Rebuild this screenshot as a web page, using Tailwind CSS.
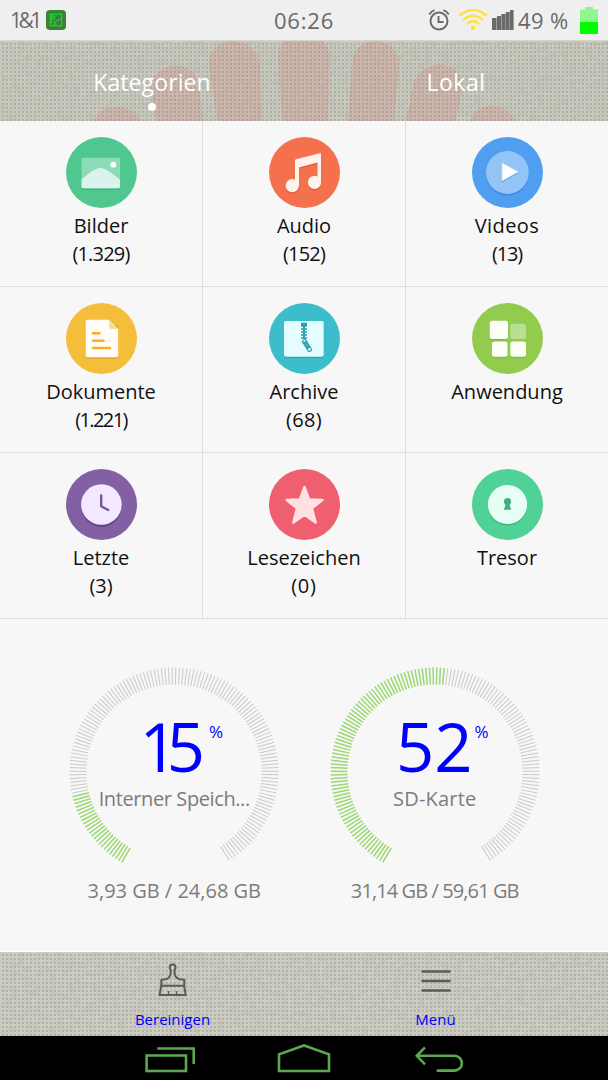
<!DOCTYPE html>
<html lang="de">
<head>
    <meta charset="UTF-8">
    <meta name="viewport" content="width=device-width, initial-scale=1.0">
    <title>Dateimanager</title>
    <script src="https://cdn.jsdelivr.net/npm/@tailwindcss/browser@4"></script>
</head>
<body class="bg-[#f7f7f7] font-['Open_Sans','Noto_Sans',sans-serif]">
    <div class="w-[608px] h-[1080px] flex flex-col overflow-hidden">

        <!-- Status bar -->
        <div class="h-[41px] shrink-0 bg-[#efefef] border-b border-[#d5d5d0] grid grid-cols-[1fr_auto_1fr] items-center text-[22px] text-[#696969]">
            <div class="flex items-center pl-[10px]">
                <span class="w-9 pt-0.5 text-[21px] tracking-[-3.5px]">1&amp;1</span>
                <svg class="w-5 h-5" viewBox="0 0 20 20" fill="none">
                    <rect width="20" height="20" rx="4" fill="#3b8139"/>
                    <g stroke="#24d52c" stroke-width="1.2">
                        <rect x="4.3" y="4.3" width="11.4" height="11.4"/>
                        <circle cx="7" cy="7.5" r="1.7"/>
                        <path d="M4.5 12.5l3-1.5M8 15.5c.5-4 3.5-6 7.5-6.5"/>
                    </g>
                </svg>
            </div>
            <span class="tracking-[0.8px]">06:26</span>
            <div class="flex items-center justify-end pr-[10px]">
                <svg class="w-[22px] h-[22px] mr-2" viewBox="0 0 22 22" fill="none" stroke="#696969" stroke-width="1.9">
                    <circle cx="11" cy="12" r="8.5"/>
                    <path d="M10.5 7v6h5"/>
                    <path d="M1.2 5.5Q3 2.5 6.5 1.2M20.8 5.5Q19 2.5 15.5 1.2"/>
                </svg>
                <svg class="w-[30px] h-[22px] mr-1" viewBox="0 0 30 22" fill="none" stroke="#fbe436" stroke-width="2.5">
                    <path d="M1.5 6.5Q15-4.5 28.5 6.5M5 11Q15 2.5 25 11M9 15Q15 9.5 21 15"/>
                    <circle cx="15" cy="18.8" r="2.2" fill="#fbe436" stroke="none"/>
                </svg>
                <svg class="w-[22px] h-5 mr-1" viewBox="0 0 22 20" fill="#6a6a6a">
                    <path d="M0 8h4.6V20H0zM5 6h4v14H5zM9.4 4h4v16h-4zM13.7 2h4v18h-4zM18 0h3.6v20H18z"/>
                </svg>
                <span class="w-[62px] whitespace-nowrap tracking-[0.4px]">49 %</span>
                <svg class="w-[18px] h-[27px]" viewBox="0 0 18 27">
                    <path d="M5 0h8v2.5h5V15H0V2.5h5z" fill="#90f790"/>
                    <path d="M0 15h18v12H0z" fill="#00fc00"/>
                </svg>
            </div>
        </div>

        <!-- Tabs on linen background -->
        <div class="relative h-20 shrink-0 overflow-hidden bg-[#c5c6ba]">
            <svg class="absolute inset-0 w-full h-full" viewBox="0 0 608 80">
                <defs>
                    <pattern id="weave" width="4" height="4" patternUnits="userSpaceOnUse">
                        <path d="M0 0h4v1H0zM0 0h1v4H0z" fill="#fff" fill-opacity=".12"/>
                        <path d="M2 2h2v2H2z" fill="#4b4f46" fill-opacity=".17"/>
                    </pattern>
                    <filter id="threads" x="0" y="0" width="100%" height="100%">
                        <feTurbulence type="fractalNoise" baseFrequency=".16 .2" numOctaves="2" seed="4"/>
                        <feColorMatrix values="0 0 0 0 .4  0 0 0 0 .4  0 0 0 0 .33  .6 0 0 0 -.2"/>
                    </filter>
                </defs>
                <g fill="#cca99f" fill-opacity=".75">
                    <path d="M94 80C99 62 134 61 141 80z"/>
                    <path d="M156 80L151 50C149 20 192 15 199 43L203 80z"/>
                    <path d="M217 80L209 25C207-7 255-8 260 23L262 80z"/>
                    <path d="M282 80L278 15C279-12 329-12 330 15L328 80z"/>
                    <path d="M348 80L352 22C354-8 400-7 399 25L394 80z"/>
                    <path d="M406 80L413 43C424 14 465 18 462 48L456 80z"/>
                    <path d="M470 80C476 60 506 59 515 80z"/>
                </g>
                <rect width="608" height="80" fill="url(#weave)"/>
                <rect width="608" height="80" filter="url(#threads)"/>
            </svg>
            <div class="relative grid grid-cols-2 text-center text-white text-[23px] leading-8 pt-[25px]">
                <div class="flex flex-col items-center">
                    <span class="tracking-[0.1px]">Kategorien</span>
                    <span class="w-2 h-2 rounded-full bg-white mt-[5px]"></span>
                </div>
                <span class="tracking-[0.5px]">Lokal</span>
            </div>
        </div>

        <!-- Categories -->
        <div class="grid grid-cols-[203px_203px_202px] auto-rows-[166px] text-center text-[20px] leading-7 text-[#111]">
            <div class="flex flex-col items-center pt-4 border-r border-b border-[#dedede]">
                <svg class="w-[71px] h-[71px] mb-1 shrink-0" viewBox="0 0 71 71">
                    <circle cx="35.5" cy="35.5" r="35.5" fill="#50c78f"/>
                    <rect x="15.5" y="22.5" width="38.5" height="30.5" rx="1.5" fill="#3fb57d"/>
                    <rect x="15.5" y="20.7" width="38.5" height="30.6" rx="1.5" fill="#8edbb7"/>
                    <path d="M15.5 42.5C23 36 29 31 34.5 31S46 36 54 43v6.8q0 1.5-1.5 1.5H17q-1.5 0-1.5-1.5z" fill="#daf3ee"/>
                    <circle cx="47.3" cy="27.7" r="2.9" fill="#fff"/>
                </svg>
                <span>Bilder</span>
                <span class="tracking-[-0.8px]">(1.329)</span>
            </div>
            <div class="flex flex-col items-center pt-4 border-r border-b border-[#dedede]">
                <svg class="w-[71px] h-[71px] mb-1 shrink-0" viewBox="0 0 71 71">
                    <circle cx="35.5" cy="35.5" r="35.5" fill="#f5714d"/>
                    <g fill="#e85a38" transform="translate(0 1.5)">
                        <path d="M26 23.5q0-1 1-1.3l24-6q1-.2 1 .8V46h-3.500V25.500L30 30.500V49h-4z"/>
                        <circle cx="23.2" cy="48.7" r="6.6"/>
                        <circle cx="45.5" cy="45.3" r="6.6"/>
                    </g>
                    <g fill="#fff3f0">
                        <path d="M26 23.5q0-1 1-1.3l24-6q1-.2 1 .8V46h-3.500V25.500L30 30.500V49h-4z"/>
                        <circle cx="23.2" cy="48.7" r="6.6"/>
                        <circle cx="45.5" cy="45.3" r="6.6"/>
                    </g>
                </svg>
                <span>Audio</span>
                <span class="tracking-[-0.8px]">(152)</span>
            </div>
            <div class="flex flex-col items-center pt-4 border-b border-[#dedede]">
                <svg class="w-[71px] h-[71px] mb-1 shrink-0" viewBox="0 0 71 71">
                    <circle cx="35.5" cy="35.5" r="35.5" fill="#509eef"/>
                    <circle cx="35.4" cy="37" r="21.4" fill="#3c86ee"/>
                    <circle cx="35.4" cy="35.5" r="21.4" fill="#94c4f6"/>
                    <path d="M30 28.3l16 8.2-16 9z" fill="#6fa9ec"/>
                    <path d="M30.3 26.5l15.5 8.3-15.5 8.8z" fill="#fff" stroke="#fff" stroke-width=".6" stroke-linejoin="round"/>
                </svg>
                <span class="tracking-[0.4px]">Videos</span>
                <span class="tracking-[-1.2px]">(13)</span>
            </div>

            <div class="flex flex-col items-center pt-4 border-r border-b border-[#dedede]">
                <svg class="w-[71px] h-[71px] mb-1 shrink-0" viewBox="0 0 71 71">
                    <circle cx="35.5" cy="35.5" r="35.5" fill="#f4bd3a"/>
                    <rect x="19.7" y="22" width="32.5" height="33.8" rx="2" fill="#e0a82c"/>
                    <path d="M21.7 16.7H43l9.2 9.3v26.3q0 2-2 2H21.7q-2 0-2-2V18.7q0-2 2-2z" fill="#fffdf5"/>
                    <path d="M43 16.7l9.2 9.3H45q-2 0-2-2z" fill="#f1dfa9"/>
                    <path d="M27 30.3h6.5M27 37.7h10.5M27 45h17" stroke="#f9ae25" stroke-width="2.6" stroke-linecap="round"/>
                </svg>
                <span>Dokumente</span>
                <span class="tracking-[-1.6px]">(1.221)</span>
            </div>
            <div class="flex flex-col items-center pt-4 border-r border-b border-[#dedede]">
                <svg class="w-[71px] h-[71px] mb-1 shrink-0" viewBox="0 0 71 71">
                    <circle cx="35.5" cy="35.5" r="35.5" fill="#3dbccb"/>
                    <rect x="15" y="20" width="39.7" height="35" rx="2" fill="#2fa4b3"/>
                    <rect x="15" y="18" width="39.7" height="35.7" rx="2" fill="#e5fdff"/>
                    <g fill="none" stroke="#319fb2">
                        <path d="M32 21.7h6" stroke-width="4"/>
                        <path d="M35 23v13" stroke-width="2"/>
                        <path d="M32 26h6M32 29h6M32 32h6M32 35h6" stroke-width="1.5"/>
                        <path d="M35.5 38.5l5 8" stroke-width="5" stroke-linecap="round"/>
                        <path d="M36.7 40.5l2 3.2" stroke="#62c4cf" stroke-width="1"/>
                    </g>
                    <circle cx="35.3" cy="37.7" r="1" fill="#e5fdff"/>
                    <circle cx="40.5" cy="46.4" r="1.4" fill="#e5fdff"/>
                </svg>
                <span>Archive</span>
                <span class="tracking-[0.3px]">(68)</span>
            </div>
            <div class="flex flex-col items-center pt-4 border-b border-[#dedede]">
                <svg class="w-[71px] h-[71px] mb-1 shrink-0" viewBox="0 0 71 71">
                    <circle cx="35.5" cy="35.5" r="35.5" fill="#93cb4e"/>
                    <g fill="#83b944">
                        <rect x="17.7" y="19.2" width="18.3" height="18.3" rx="2.5"/>
                        <rect x="20" y="40" width="15.5" height="15.2" rx="2.5"/>
                        <rect x="38.3" y="40" width="15.7" height="15.2" rx="2.5"/>
                    </g>
                    <rect x="38.3" y="20.7" width="15.7" height="15.2" rx="2.5" fill="#b9df93"/>
                    <g fill="#fcfff5">
                        <rect x="17.7" y="17.7" width="18.3" height="18.3" rx="2.5"/>
                        <rect x="20" y="38.5" width="15.5" height="15.2" rx="2.5"/>
                        <rect x="38.3" y="38.5" width="15.7" height="15.2" rx="2.5"/>
                    </g>
                </svg>
                <span>Anwendung</span>
            </div>

            <div class="flex flex-col items-center pt-4 border-r border-b border-[#dedede]">
                <svg class="w-[71px] h-[71px] mb-1 shrink-0" viewBox="0 0 71 71">
                    <circle cx="35.5" cy="35.5" r="35.5" fill="#8260a3"/>
                    <circle cx="35.4" cy="37.7" r="20.3" fill="#69478f"/>
                    <circle cx="35.4" cy="35.5" r="20.3" fill="#f3e8ff"/>
                    <path d="M35.2 26.5v10.7l7 3.8" fill="none" stroke="#77549a" stroke-width="2.4" stroke-linecap="round" stroke-linejoin="round"/>
                </svg>
                <span>Letzte</span>
                <span>(3)</span>
            </div>
            <div class="flex flex-col items-center pt-4 border-r border-b border-[#dedede]">
                <svg class="w-[71px] h-[71px] mb-1 shrink-0" viewBox="0 0 71 71">
                    <circle cx="35.5" cy="35.5" r="35.5" fill="#f05f70"/>
                    <path d="M35.5 18.2l4.6 12.4 13.2.4-10.4 8.3 3.7 14.2-11.1-7.7-11.1 7.7 3.7-14.2L17.7 31l13.2-.4z" fill="#ffe1e4" stroke="#ffe1e4" stroke-width="2.6" stroke-linejoin="round"/>
                </svg>
                <span>Lesezeichen</span>
                <span class="tracking-[0.8px]">(0)</span>
            </div>
            <div class="flex flex-col items-center pt-4 border-b border-[#dedede]">
                <svg class="w-[71px] h-[71px] mb-1 shrink-0" viewBox="0 0 71 71">
                    <circle cx="35.5" cy="35.5" r="35.5" fill="#50d296"/>
                    <circle cx="35.5" cy="37.2" r="19.6" fill="#41bd84"/>
                    <circle cx="35.5" cy="35.5" r="19.6" fill="#e6fef5"/>
                    <circle cx="35.5" cy="32.5" r="3.6" fill="#3fae80"/>
                    <path d="M33.7 33h3.6l.5 4 1.5 3.7h-7.600l1.500-3.700z" fill="#3fae80"/>
                </svg>
                <span>Tresor</span>
            </div>
        </div>

        <!-- Storage gauges -->
        <div class="h-[333px] shrink-0 grid grid-cols-2 pl-[44px] pr-[43px] pt-[47px] border-b border-white text-center text-[20px] leading-7 text-[#7c7c7c]">
            <div class="flex flex-col items-center">
                <div class="relative w-[212px] h-[200px]">
                    <svg class="absolute inset-0 w-full h-full" viewBox="0 0 212 200" data-filled="24"></svg>
                    <div class="relative flex flex-col items-center pt-[53px]">
                        <div class="flex h-[54px] mb-3 text-[#0000ff] leading-[54px] pl-[14px]">
                            <span class="text-[67px] tracking-[-11px] font-medium">15</span>
                            <span class="text-[17px] leading-[26px] ml-[15px] font-medium">%</span>
                        </div>
                        <span class="whitespace-nowrap tracking-[-0.4px]">Interner Speich...</span>
                    </div>
                </div>
                <span class="mt-[11px]">3,93 GB / 24,68 GB</span>
            </div>
            <div class="flex flex-col items-center">
                <div class="relative w-[212px] h-[200px]">
                    <svg class="absolute inset-0 w-full h-full" viewBox="0 0 212 200" data-filled="78"></svg>
                    <div class="relative flex flex-col items-center pt-[53px]">
                        <div class="flex h-[54px] mb-3 text-[#0000ff] leading-[54px] pl-[15px]">
                            <span class="text-[67px] font-medium">52</span>
                            <span class="text-[17px] leading-[26px] ml-0.5 font-medium">%</span>
                        </div>
                        <span class="tracking-[0.2px]">SD-Karte</span>
                    </div>
                </div>
                <span class="mt-[11px] tracking-[-0.9px]">31,14 GB / 59,61 GB</span>
            </div>
        </div>

        <!-- Toolbar -->
        <div class="relative h-[84px] shrink-0 bg-[#c9c9bf]">
            <svg class="absolute inset-0 w-full h-full">
                <rect width="608" height="84" fill="url(#weave)"/>
                <rect width="608" height="84" filter="url(#threads)"/>
            </svg>
            <div class="relative grid grid-cols-2 px-[41px] pt-[10px] text-[15px] leading-5 text-[#0000f5]">
                <div class="flex flex-col items-center gap-[11px]">
                    <svg class="w-[31px] h-9" viewBox="0 0 31 36" fill="none" stroke="#5b5b5b" stroke-width="2" stroke-linejoin="round">
                        <path d="M13.8 8.5c-.1-1-1.1-1.5-1.1-3a2.900 2.900 0 0 1 5.800 0c0 1.500-1 2-1.100 3-.1 5 2.200 8.300 5.600 8.700l4.300.6v6H4.300v-6l4.300-.6c3.300-.4 5.300-3.700 5.200-8.700z"/>
                        <path d="M4.3 23.7L2.5 33h26.2l-1.6-9.3"/>
                        <path d="M11.5 29v4M19.5 29v4" stroke-width="1.3"/>
                    </svg>
                    <span>Bereinigen</span>
                </div>
                <div class="flex flex-col items-center gap-[11px]">
                    <svg class="w-[30px] h-9" viewBox="0 0 30 36" stroke="#5b5b5b" stroke-width="2.5" stroke-linecap="round">
                        <path d="M1.5 9.5h27M1.5 19h27M1.5 28.5h27"/>
                    </svg>
                    <span>Menü</span>
                </div>
            </div>
        </div>

        <!-- Android navigation -->
        <div class="h-11 shrink-0 bg-black flex items-center gap-[82px] pl-[145px] pt-1">
            <svg class="w-[50px] h-7" viewBox="0 0 50 28" fill="none" stroke="#5da653" stroke-width="2.6">
                <rect x="1.6" y="9.5" width="39.4" height="15.5"/>
                <path d="M12.3 2.5H48.7v15.6"/>
            </svg>
            <svg class="w-[54px] h-7 mr-0.5 overflow-visible" viewBox="0 0 54 28" fill="none" stroke="#5da653" stroke-width="2.6">
                <path d="M2 25V8.3L27-.5l25 8.800V25z"/>
            </svg>
            <svg class="w-[50px] h-7" viewBox="0 0 50 28" fill="none" stroke="#5da653" stroke-width="2.6">
                <path d="M10 1.300L1.800 9.800l8.200 8.500M1.800 9.800H39.500a7.400 7.400 0 0 1 0 14.800H21.700"/>
            </svg>
        </div>
    </div>

    <script>
        const TICKS = 149;
        const STEP = 2.013;

        // ticks run clockwise, starting 30 degrees left of the bottom
        document.querySelectorAll('svg[data-filled]').forEach(svg => {
            const filled = Number(svg.dataset.filled);
            let lines = '';
            for (let i = 0; i < TICKS; i++) {
                const on = i < filled;
                lines += `<line x1="106" y1="193.5" x2="106" y2="210.5" transform="rotate(${30 + i * STEP} 106 106)" stroke="${on ? '#9bd873' : '#c9c9c9'}" stroke-width="${on ? 1.5 : 1}"/>`;
            }
            svg.innerHTML = lines;
        });
    </script>
</body>
</html>
